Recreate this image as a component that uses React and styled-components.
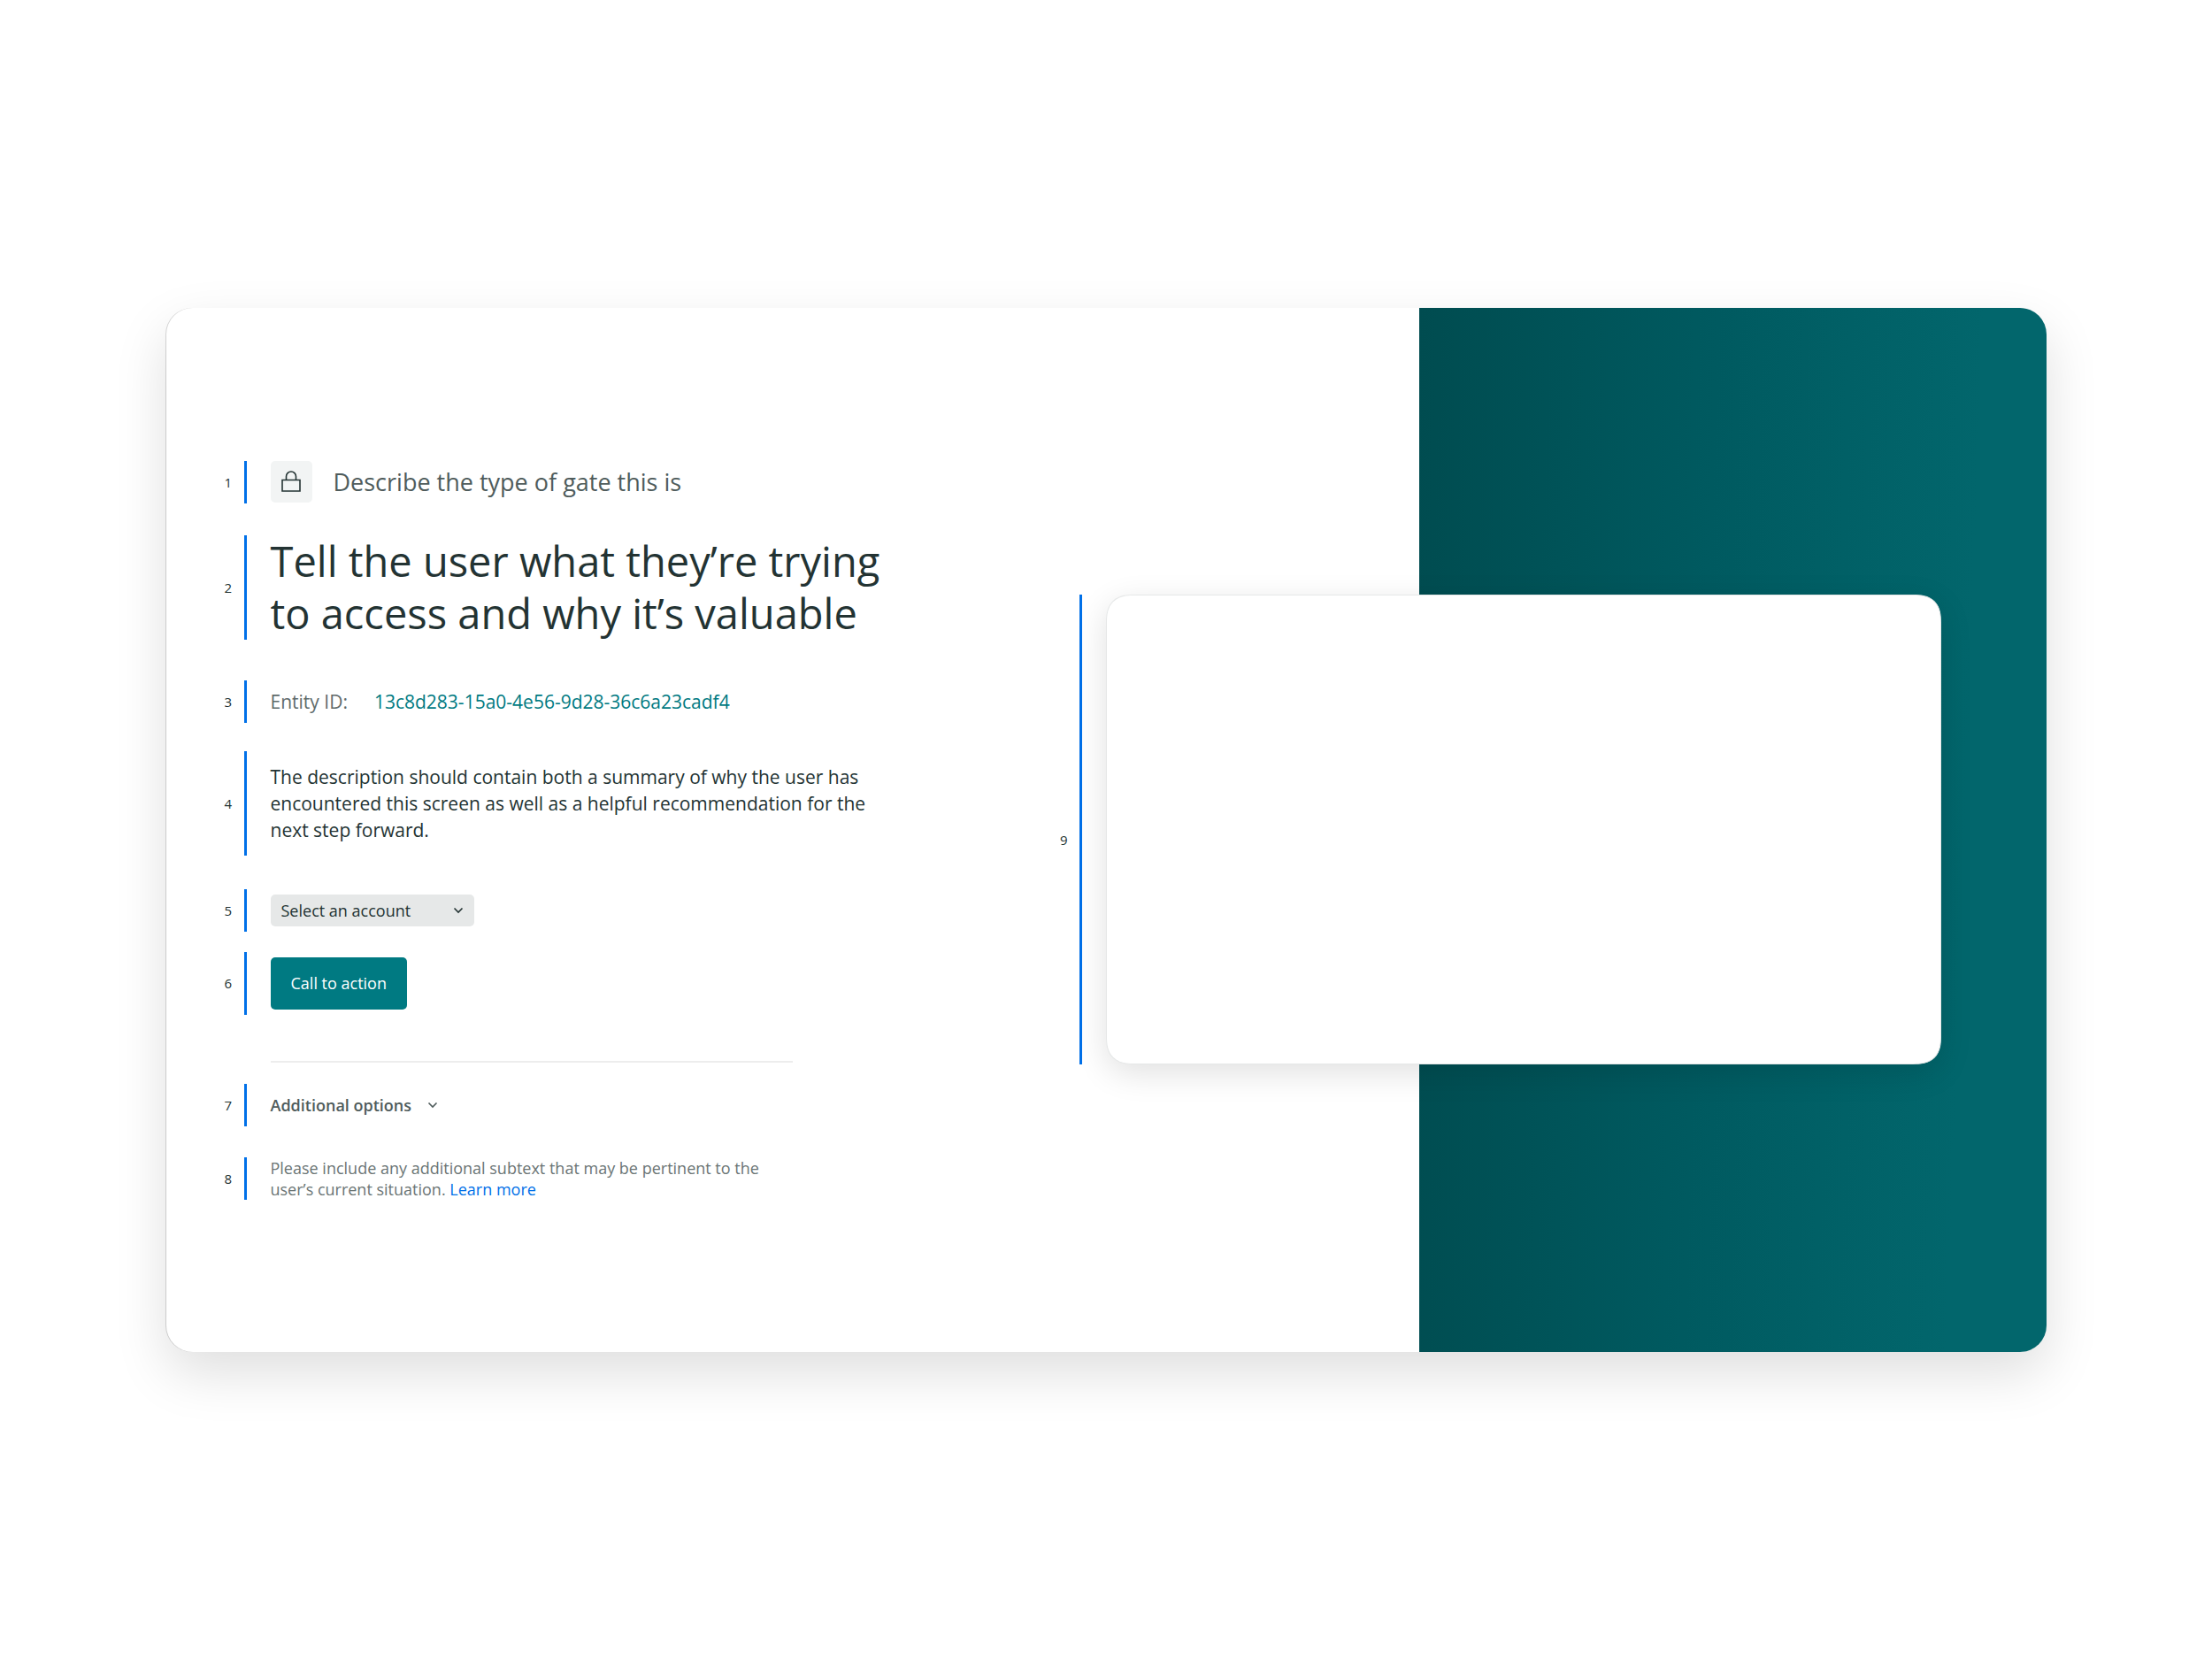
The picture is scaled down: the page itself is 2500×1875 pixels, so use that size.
import React, { useState } from "react"
import styled, { createGlobalStyle } from "styled-components"

const GlobalStyle = createGlobalStyle`
  * {
    box-sizing: border-box;
  }

  body {
    margin: 0;
    background: #ffffff;
    color: #233333;
    font-family: "Open Sans", "Noto Sans", sans-serif;
  }

  button,
  select {
    font-family: inherit;
  }
`

const Page = styled.div`
  display: flex;
  align-items: center;
  justify-content: center;
  min-height: 100vh;
`

const Card = styled.main`
  display: grid;
  grid-template-columns: repeat(18, minmax(0, 1fr));
  align-items: center;
  width: 85%;
  border-radius: 30px;
  background: #ffffff;
  box-shadow: 0 24px 60px rgba(0, 0, 0, 0.13), -1px 0 0 rgba(0, 0, 0, 0.15);
`

const Backdrop = styled.div`
  grid-column: 13 / -1;
  grid-row: 1;
  align-self: stretch;
  border-radius: 0 30px 30px 0;
  background: linear-gradient(92deg, #004c50 0%, #005a60 45%, #02666c 85%);
`

const Content = styled.section`
  grid-column: 1 / 9;
  grid-row: 1;
  padding: 173px 0 172px 66px;
`

const Note = styled.div`
  display: flex;
  align-items: center;
  min-height: ${(props) => props.$height || 48}px;
  margin-top: ${(props) => props.$top || 0}px;
`

const Marker = styled.div`
  display: flex;
  flex: none;
  align-items: center;
  align-self: stretch;
  width: 52px;
  font-size: 15px;
  font-weight: 500;

  &::after {
    content: "";
    align-self: stretch;
    width: 3px;
    background: #0070e8;
  }
`

const Number = styled.span`
  width: 22px;
`

const PreviewNumber = styled(Number)`
  padding-top: 24px;
`

const LockBox = styled.div`
  display: flex;
  align-items: center;
  justify-content: center;
  width: 47px;
  height: 47px;
  margin-right: 24px;
  border-radius: 5px;
  background: #f2f4f4;
`

const Kind = styled.p`
  margin: 0;
  color: #4f5c5c;
  font-size: 27px;
  line-height: 36px;
`

const Title = styled.h1`
  margin: 0;
  font-size: 47px;
  font-weight: 400;
  line-height: 59px;
`

const Entity = styled.p`
  display: flex;
  gap: 30px;
  margin: 0;
  color: #5f6b6b;
  font-size: 21px;
  line-height: 30px;
`

const EntityId = styled.span`
  color: #007a82;
`

const Description = styled.p`
  max-width: 680px;
  margin: 0;
  font-size: 21px;
  line-height: 30px;
`

const Picker = styled.div`
  display: grid;
  align-items: center;
  width: 230px;

  & > * {
    grid-area: 1 / 1;
  }

  svg {
    justify-self: end;
    margin-right: 12px;
    pointer-events: none;
  }
`

const Select = styled.select`
  width: 100%;
  height: 36px;
  padding: 0 36px 0 12px;
  border: 0;
  border-radius: 5px;
  appearance: none;
  background: #e6e8e8;
  color: #233333;
  font-size: 18px;
`

const Action = styled.button`
  height: 59px;
  padding: 0 23px;
  border: 0;
  border-radius: 5px;
  background: #007a82;
  color: #ffffff;
  font-size: 18px;
`

const Divider = styled.hr`
  width: 590px;
  height: 2px;
  margin: 52px 0 0 52px;
  border: 0;
  background: #ededed;
`

const Options = styled.button`
  display: flex;
  align-items: center;
  gap: 18px;
  padding: 0;
  border: 0;
  background: none;
  color: #4f5c5c;
  font-size: 18px;
  font-weight: 600;
`

const Subtext = styled.p`
  margin: 0;
  color: #6b7575;
  font-size: 18px;
  line-height: 24px;

  a {
    color: #0070e8;
    text-decoration: none;
  }
`

const Preview = styled.section`
  display: flex;
  grid-column: 9 / 18;
  grid-row: 1;
  justify-content: flex-end;
`

const Panel = styled.div`
  width: calc(100% * 8 / 9);
  aspect-ratio: 16 / 9;
  border: 1px solid #e6e8e8;
  border-radius: 32px;
  corner-shape: superellipse(1.4);
  background: #ffffff;
  box-shadow: 0 10px 36px rgba(0, 0, 0, 0.12);
`

const Chevron = () => (
  <svg width="12" height="8" viewBox="0 0 12 8" fill="none" aria-hidden="true">
    <path d="M1.5 1.5 6 6l4.5-4.5" stroke="currentColor" strokeWidth="1.6" />
  </svg>
)

const Lock = () => (
  <svg width="24" height="26" viewBox="0 0 24 26" fill="none" aria-hidden="true">
    <g stroke="#233333" strokeWidth="1.6">
      <path d="M2 10.5h20v12.5H2z" />
      <path d="M6.5 10.5v-4a5.5 5.5 0 0 1 11 0v4" />
    </g>
  </svg>
)

const Step = ({ number, height, top, children }) => (
  <Note $height={height} $top={top}>
    <Marker>
      <Number>{number}</Number>
    </Marker>
    {children}
  </Note>
)

function App() {
  const [open, setOpen] = useState(false)

  return (
    <Page>
      <GlobalStyle />
      <Card>
        <Backdrop />
        <Content>
          <Step number={1}>
            <LockBox>
              <Lock />
            </LockBox>
            <Kind>Describe the type of gate this is</Kind>
          </Step>
          <Step number={2} height={118} top={36}>
            <Title>
              Tell the user what they’re trying
              <br />
              to access and why it’s valuable
            </Title>
          </Step>
          <Step number={3} top={46}>
            <Entity>
              Entity ID:
              <EntityId>13c8d283-15a0-4e56-9d28-36c6a23cadf4</EntityId>
            </Entity>
          </Step>
          <Step number={4} height={118} top={32}>
            <Description>
              The description should contain both a summary of why the user has
              encountered this screen as well as a helpful recommendation for
              the next step forward.
            </Description>
          </Step>
          <Step number={5} top={38}>
            <Picker>
              <Select aria-label="Account">
                <option>Select an account</option>
              </Select>
              <Chevron />
            </Picker>
          </Step>
          <Step number={6} height={71} top={23}>
            <Action type="button">Call to action</Action>
          </Step>
          <Divider />
          <Step number={7} top={24}>
            <Options
              type="button"
              aria-expanded={open}
              onClick={() => setOpen(!open)}
            >
              Additional options
              <Chevron />
            </Options>
          </Step>
          <Step number={8} top={35}>
            <Subtext>
              Please include any additional subtext that may be pertinent to the
              <br />
              user’s current situation. <a href="#learn">Learn more</a>
            </Subtext>
          </Step>
        </Content>
        <Preview aria-label="Preview">
          <Marker>
            <PreviewNumber>9</PreviewNumber>
          </Marker>
          <Panel />
        </Preview>
      </Card>
    </Page>
  )
}

export default App
